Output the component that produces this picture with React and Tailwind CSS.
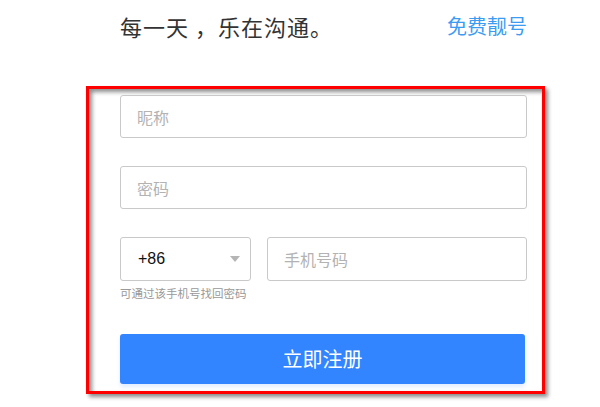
export default function App() {
  const font = { fontFamily: '"Noto Sans CJK SC", "Liberation Sans", sans-serif' };
  return (
    <div className="w-[600px] h-[407px] bg-white overflow-hidden" style={font}>
      {/* header */}
      <div className="ml-[120px] w-[407px] pt-[10px] flex items-center justify-between">
        <span className="text-[22px] leading-[32px] text-[#333333] tracking-[1px]">每一天 ，乐在沟通。</span>
        <a className="text-[20px] leading-[32px] text-[#3b9cf2] no-underline">免费靓号</a>
      </div>

      {/* form (outlined) */}
      <div className="mt-[44px] ml-[86px] w-[459px] h-[308px] border-[3px] border-[#ff0000] shadow-[3px_3px_4px_rgba(0,0,0,0.45),inset_3px_3px_4px_rgba(0,0,0,0.45)] pl-[31px] pt-[6px]">
        <div className="w-[407px] h-[43px] border border-[#c9c9c9] rounded-[3px] flex items-center pl-[16px]">
          <span className="text-[16px] text-[#b3b3b3]">昵称</span>
        </div>
        <div className="mt-[28px] w-[407px] h-[43px] border border-[#c9c9c9] rounded-[3px] flex items-center pl-[16px]">
          <span className="text-[16px] text-[#b3b3b3]">密码</span>
        </div>
        <div className="mt-[28px] flex gap-[16px]">
          <div className="w-[131px] h-[44px] border border-[#c9c9c9] rounded-[3px] flex items-center justify-between pl-[17px] pr-[10px]">
            <span className="text-[16px] text-[#111111]" style={{ fontFamily: '"Liberation Sans", sans-serif' }}>+86</span>
            <svg width="10" height="6" viewBox="0 0 10 6">
              <path d="M0 0 L10 0 L5 6 Z" fill="#b5b5b5" />
            </svg>
          </div>
          <div className="w-[260px] h-[44px] border border-[#c9c9c9] rounded-[3px] flex items-center pl-[16px]">
            <span className="text-[16px] text-[#b3b3b3]">手机号码</span>
          </div>
        </div>
        <div className="mt-[5px] text-[11.5px] leading-[14px] text-[#999999]">可通过该手机号找回密码</div>
        <button className="mt-[34px] w-[405px] h-[50px] rounded-[3px] bg-[#3385ff] text-white text-[20px] shadow-[0_3px_4px_rgba(51,133,255,0.15)]">
          立即注册
        </button>
      </div>
    </div>
  );
}
